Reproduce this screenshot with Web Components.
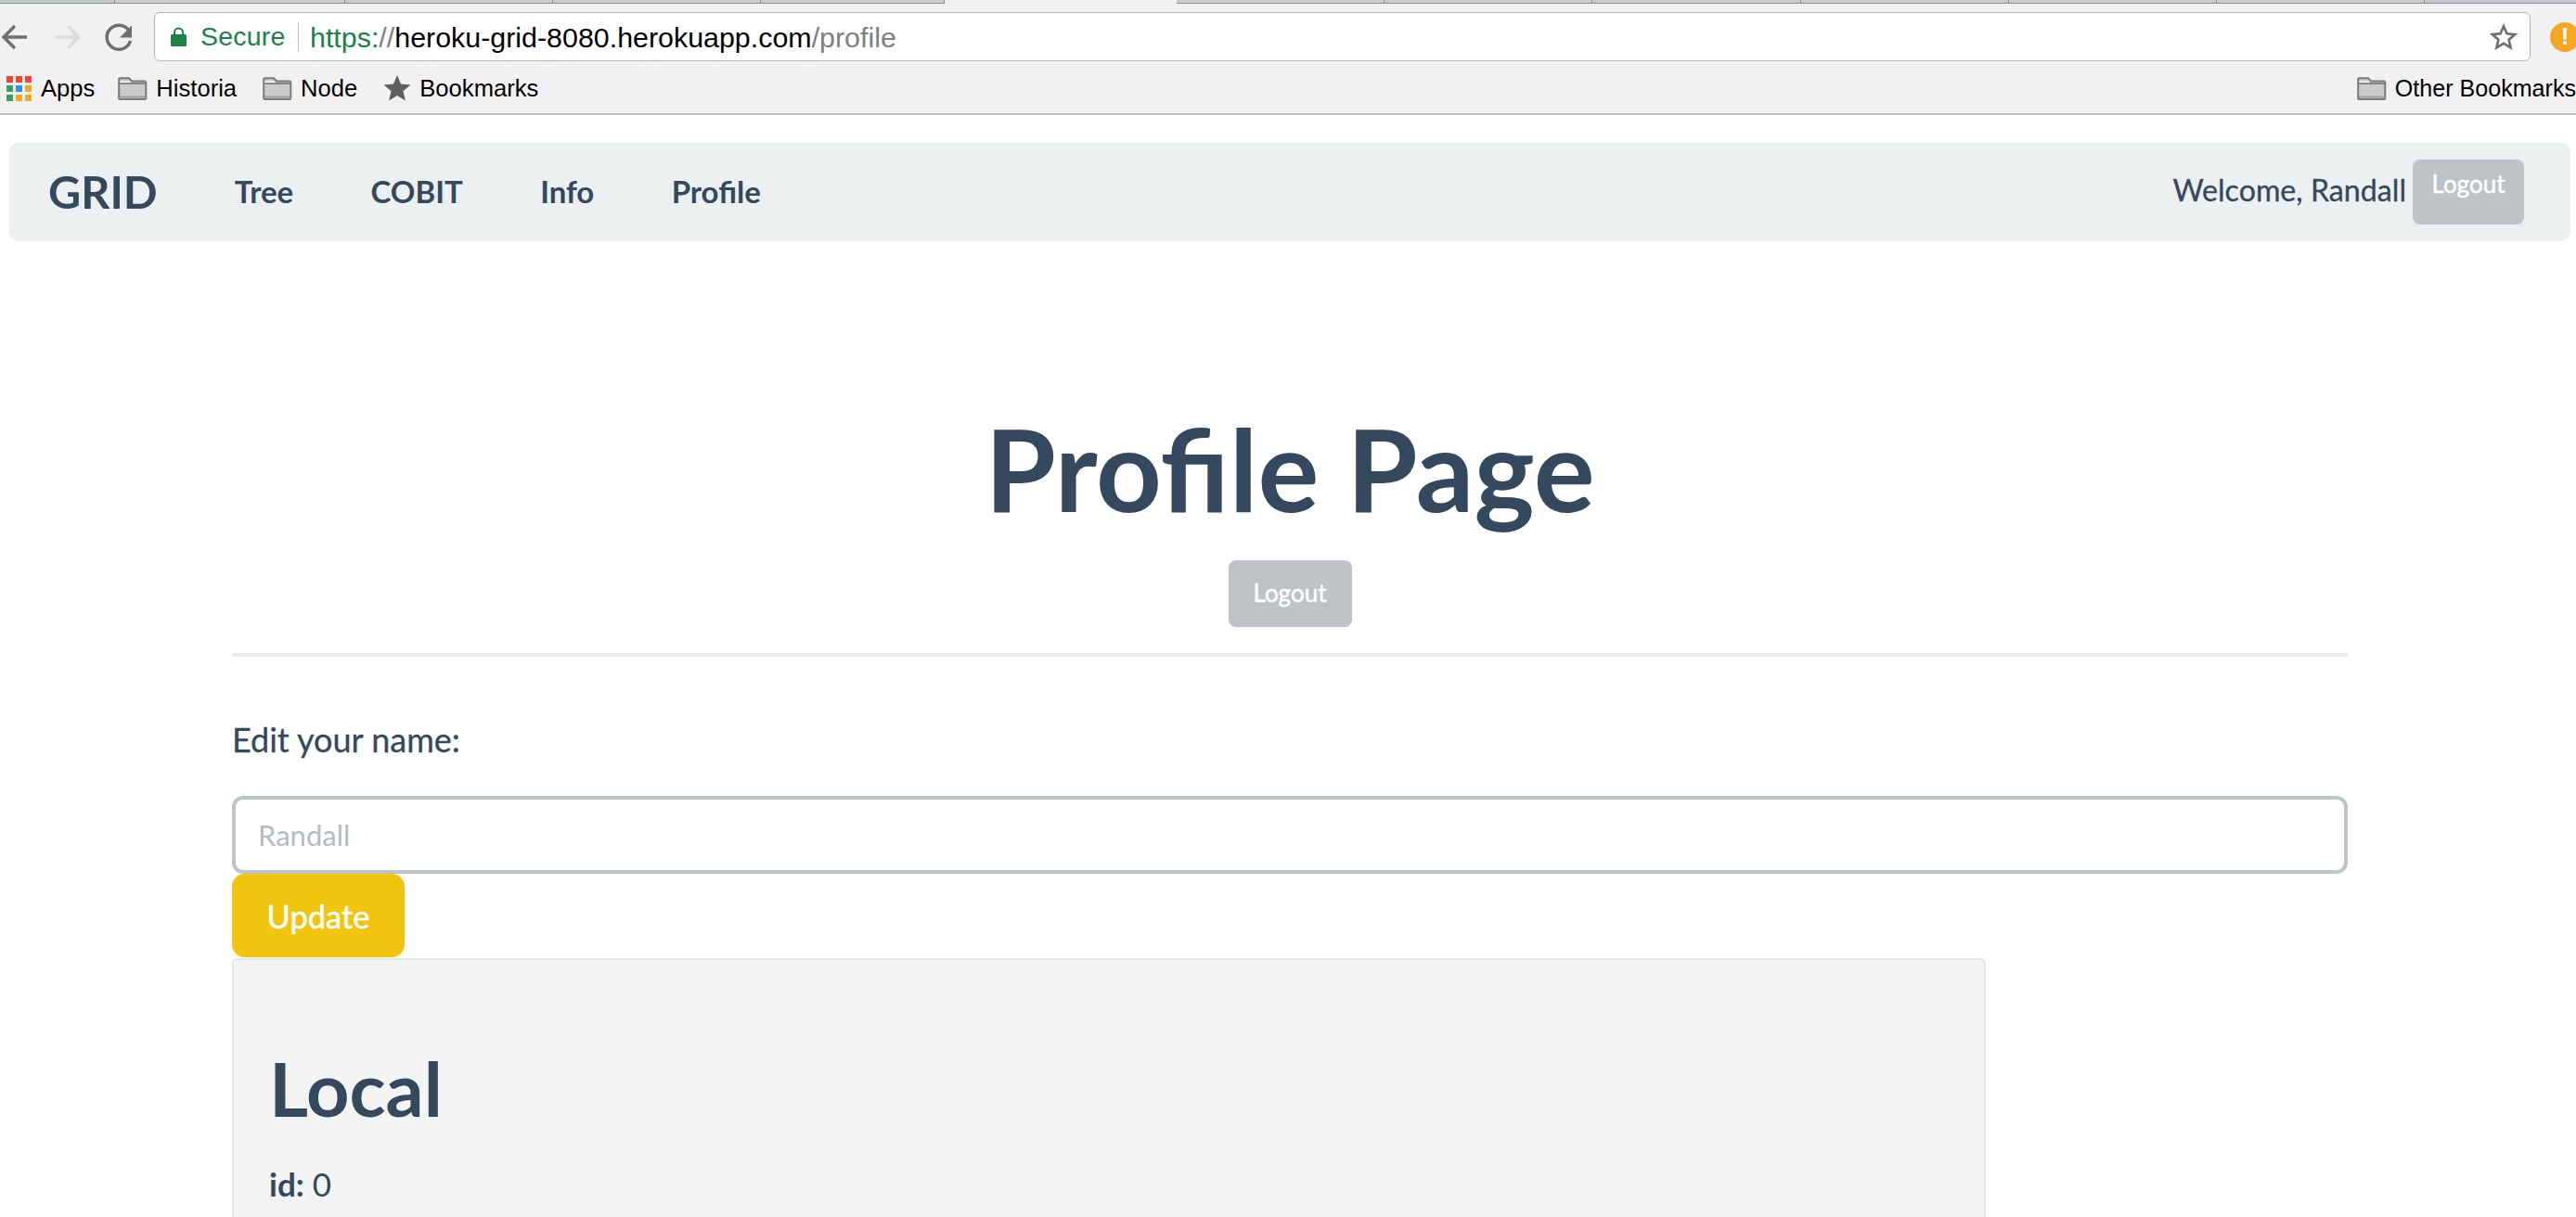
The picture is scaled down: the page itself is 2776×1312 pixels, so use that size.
<!DOCTYPE html>
<html>
<head>
<meta charset="utf-8">
<title>Profile</title>
<style>
  html, body { margin: 0; height: 1312px; overflow: hidden; background: #fff; }
  body { font-family: Lato, sans-serif; color: #34495e; }
</style>
</head>
<body>
<browser-chrome></browser-chrome>
<site-navbar name="Randall"></site-navbar>
<profile-page name="Randall"></profile-page>

<script>
"use strict";

const FOLDER = `<svg width="32" height="25" viewBox="0 0 32 25"><path d="M1.200 23V2.500a1.300 1.300 0 0 1 1.300-1.300h9.500l3 3.300h14a1.300 1.300 0 0 1 1.300 1.300V23a1 1 0 0 1-1 1H2.200a1 1 0 0 1-1-1z" fill="#cbcbcb" stroke="#7b7b7b" stroke-width="2"/><path d="M2 7h28" stroke="#7b7b7b" stroke-width="1.800"/><path d="M2.400 5.400h11" stroke="#fff" stroke-width="1.400"/><path d="M2 21.500h28" stroke="#9a9a9a" stroke-width="2"/></svg>`;

class BrowserChrome extends HTMLElement {
  constructor() {
    super();
    const tab = (w, color) => `<i style="width:${w}px${color ? ";background:" + color : ""}"></i>`;
    const tabs = [tab(124, "#c3cdcb"), tab(248), tab(224), tab(224), tab(198)].join("")
      + `<u></u>`
      + [tab(224), tab(224), tab(225), tab(224), tab(224), tab(224), tab(163, "#c5c9cf")].join("");
    this.attachShadow({ mode: "open" }).innerHTML = `
    <style>
      :host { display: block; font-family: "Liberation Sans", Arial, sans-serif; background: #f1f1f1; border-bottom: 2px solid #c4c4c4; height: 122px; overflow: hidden; color: #000; }
      .tabs { height: 4px; display: flex; }
      .tabs i { display: block; flex: none; box-sizing: border-box; height: 4px; background: #cbcbcb; border-bottom: 1px solid #8f8f8f; border-right: 1px solid #8d8d8d; }
      .tabs i:last-child { border-right: 0; }
      .tabs u { display: block; flex: none; width: 250px; }
      .toolbar { display: flex; align-items: center; height: 53px; margin-top: 9px; }
      .nav { width: 166px; flex: none; }
      .nav svg { display: block; }
      .address { flex: none; width: 2561px; height: 53px; box-sizing: border-box; border: 1.500px solid #b5b5b5; border-radius: 6px; background: #fff; display: flex; align-items: center; font-size: 30.400px; padding-left: 17px; }
      .lock { margin-right: 15px; flex: none; }
      .secure { color: #1b8146; font-size: 28.500px; letter-spacing: .2px; }
      .sep { width: 1.500px; height: 32px; background: #bdbdbd; margin: 0 12px 0 13px; }
      .url { position: relative; top: 1px; }
      .scheme { color: #1b8146; }
      .slashes, .path { color: #808080; }
      .star { margin-left: auto; margin-right: 13px; }
      .alert { width: 32px; height: 32px; border-radius: 50%; background: #f5a623; margin-left: 21px; color: #fff; flex: none; display: flex; align-items: center; justify-content: center; font: bold 26px "Liberation Sans", sans-serif; }
      .bookmarks { display: flex; align-items: center; height: 34px; margin-top: 12px; padding-left: 7px; font-size: 25.600px; white-space: nowrap; }
      .bm { display: flex; align-items: center; gap: 9px; margin-right: 28px; }
      .grid { display: grid; grid-template-columns: repeat(3, 7px); grid-auto-rows: 7px; gap: 3px; margin-right: 1px; }
      .grid b { display: block; }
      .other { margin: 0 0 0 auto; font-size: 25.100px; }
    </style>
    <div class="tabs">${tabs}</div>
    <div class="toolbar">
      <div class="nav">
        <svg width="166" height="40" viewBox="0 0 166 40" fill="none">
          <path d="M29 20H5M16 8 4 20l12 12" stroke="#6e6e6e" stroke-width="3.400"/>
          <path d="M59 20h24M73 8l12 12-12 12" stroke="#dcdcdc" stroke-width="3.400"/>
          <path d="M139 13a13 13 0 1 0 1.600 11" stroke="#6e6e6e" stroke-width="3.400"/>
          <path d="M142 7.500v13h-13z" fill="#6e6e6e"/>
        </svg>
      </div>
      <div class="address">
        <svg class="lock" width="17" height="21" viewBox="0 0 17 21"><path d="M1.500 8H3V6a5.500 5.500 0 0 1 11 0v2h1.500a1.500 1.500 0 0 1 1.500 1.500V19.500a1.500 1.500 0 0 1-1.500 1.500H1.500A1.500 1.500 0 0 1 0 19.500V9.500A1.500 1.500 0 0 1 1.500 8zM5 8h7V6a3.500 3.500 0 0 0-7 0z" fill="#1b8146"/></svg>
        <span class="secure">Secure</span><span class="sep"></span>
        <span class="url"><span class="scheme">https:</span><span class="slashes">//</span>heroku-grid-8080.herokuapp.com<span class="path">/profile</span></span>
        <svg class="star" width="30" height="30" viewBox="0 0 32 32"><path d="m16 3.500 3.700 8.600 9.300.8-7 6.100 2.100 9.100L16 23.300l-8.100 4.800L10 19l-7-6.100 9.300-.8z" fill="none" stroke="#6e6e6e" stroke-width="2.800"/></svg>
      </div>
      <div class="alert">!</div>
    </div>
    <div class="bookmarks">
      <div class="bm" style="margin-right:25px">
        <div class="grid">
          <b style="background:#f44336"></b><b style="background:#f44336"></b><b style="background:#f44336"></b>
          <b style="background:#34a35a"></b><b style="background:#2f8cf0"></b><b style="background:#f5a623"></b>
          <b style="background:#34a35a"></b><b style="background:#f5a623"></b><b style="background:#f5a623"></b>
        </div>Apps</div>
      <div class="bm">${FOLDER}Historia</div>
      <div class="bm">${FOLDER}Node</div>
      <div class="bm"><svg width="30" height="30" viewBox="0 0 32 32"><path d="m16 1 4.300 10.300 11.100.9-8.500 7.300 2.600 10.900L16 24.600 6.500 30.400l2.600-10.900L.6 12.200l11.100-.9z" fill="#5f5f5f"/></svg>Bookmarks</div>
      <div class="bm other">${FOLDER}Other Bookmarks</div>
    </div>`;
  }
}
customElements.define("browser-chrome", BrowserChrome);

//===================================================

class GridButton extends HTMLElement {
  constructor() {
    super();
    this.attachShadow({ mode: "open" }).innerHTML = `
    <style>
      :host { display: inline-flex; box-sizing: border-box; align-items: center; justify-content: center; color: #fff; background: #bdc3c7; border-radius: 8px; font: 400 26px Lato, sans-serif; -webkit-text-stroke: .5px #fff; }
      :host([variant="update"]) { background: #f1c40f; border-radius: 14px; font-size: 34.500px; width: 186px; height: 90px; }
    </style>
    <slot></slot>`;
  }
}
customElements.define("grid-button", GridButton);

//===================================================

class SiteNavbar extends HTMLElement {
  constructor() {
    super();
    const name = this.getAttribute("name");
    this.attachShadow({ mode: "open" }).innerHTML = `
    <style>
      :host { display: flex; align-items: center; height: 106px; margin: 30px 6px 0 10px; padding: 0 50px 0 42px; background: #ecf0f1; border-radius: 10px; font-family: Lato, sans-serif; color: #34495e; }
      .brand { font-size: 48.500px; font-weight: 700; margin-right: 83px; position: relative; top: -1px; }
      a { font-size: 33px; font-weight: 700; margin-right: 83.300px; color: inherit; text-decoration: none; position: relative; top: -1px; }
      .welcome { margin-left: auto; font-size: 32.200px; margin-right: 7px; position: relative; top: -3px; -webkit-text-stroke: .3px #34495e; }
      grid-button { width: 120px; height: 70px; align-items: flex-start; padding-top: 10px; }
    </style>
    <span class="brand">GRID</span>
    <a href="#">Tree</a><a href="#">COBIT</a><a href="#">Info</a><a href="#">Profile</a>
    <span class="welcome">Welcome, ${name}</span>
    <grid-button>Logout</grid-button>`;
  }
}
customElements.define("site-navbar", SiteNavbar);

//===================================================

class InfoCard extends HTMLElement {
  constructor() {
    super();
    this.attachShadow({ mode: "open" }).innerHTML = `
    <style>
      :host { display: block; box-sizing: border-box; width: 1890px; min-height: 400px; background: #f4f4f4; border: 2px solid #e6e6e6; border-radius: 6px; padding: 90px 38px 0; }
      h2 { font-size: 81px; line-height: 96px; font-weight: 700; margin: 0 0 30px; }
      p { font-size: 35px; line-height: 50px; margin: 0; }
      b { font-weight: 700; }
    </style>
    <h2>${this.getAttribute("heading")}</h2>
    <p><b>id:</b> ${this.getAttribute("uid")}</p>`;
  }
}
customElements.define("info-card", InfoCard);

//===================================================

class ProfilePage extends HTMLElement {
  constructor() {
    super();
    const name = this.getAttribute("name");
    this.attachShadow({ mode: "open" }).innerHTML = `
    <style>
      :host { display: block; margin: 0 246px 0 250px; font-family: Lato, sans-serif; color: #34495e; }
      header { text-align: center; padding-top: 170px; border-bottom: 4px solid #e9ebef; height: 274px; }
      h1 { font-size: 123.500px; line-height: 148px; font-weight: 700; margin: 0 0 26px; }
      header grid-button { width: 133px; height: 72px; padding-bottom: 3px; }
      label { display: block; font-size: 36px; line-height: 50px; margin-top: 64px; -webkit-text-stroke: .3px #34495e; }
      .field { display: block; box-sizing: border-box; width: 100%; height: 84px; margin-top: 36px; border: 4px solid #bdc3c7; border-radius: 12px; background: #fff; padding: 0 24px; font: 31px Lato, sans-serif; color: #34495e; outline: none; }
      .field::placeholder { color: #b4bcc2; opacity: 1; }
      info-card { margin-top: 1px; }
    </style>
    <header>
      <h1>Profile Page</h1>
      <grid-button>Logout</grid-button>
    </header>
    <label for="n">Edit your name:</label>
    <input id="n" class="field" placeholder="${name}">
    <grid-button variant="update" style="display:flex">Update</grid-button>
    <info-card heading="Local" uid="0"></info-card>`;
  }
}
customElements.define("profile-page", ProfilePage);
</script>
</body>
</html>
